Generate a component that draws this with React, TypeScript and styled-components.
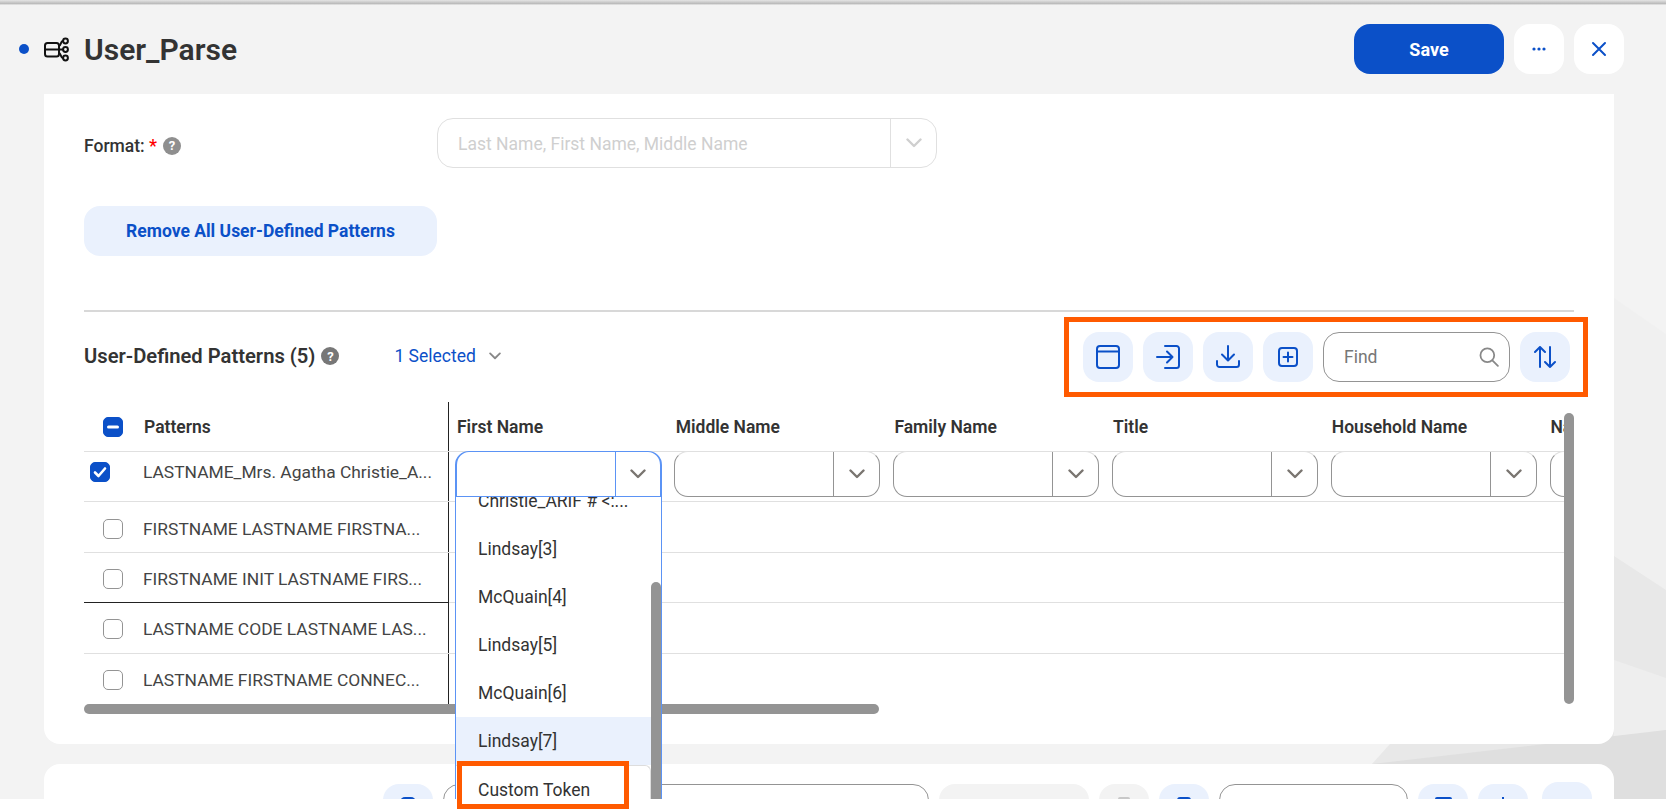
import React, { FC } from 'react'
import styled, { createGlobalStyle } from 'styled-components'

const BLUE = '#0b50c8'
const TINT = '#eaf1fd'
const THUMB = '#949494'
const LINE = '#e0e0e0'

const GlobalStyle = createGlobalStyle`
	html, body {
		margin: 0;
		padding: 0;
		background: #fff;
		overflow: hidden;
		font-family: Roboto, 'Liberation Sans', sans-serif;
	}
	* {
		box-sizing: border-box;
	}
`

const columns = ['First Name', 'Middle Name', 'Family Name', 'Title', 'Household Name', 'Name Suffix']

const rows = [
	{ text: 'FIRSTNAME LASTNAME FIRSTNA...' },
	{ text: 'FIRSTNAME INIT LASTNAME FIRS...', strong: true },
	{ text: 'LASTNAME CODE LASTNAME LAS...' },
	{ text: 'LASTNAME FIRSTNAME CONNEC...' },
]

const options = ['Christie_ARIF # <:...', 'Lindsay[3]', 'McQuain[4]', 'Lindsay[5]', 'McQuain[6]', 'Lindsay[7]']

const Chevron: FC<{ size?: number; color?: string }> = ({ size = 16, color = '#7a7570' }) => (
	<svg width={size} height={size} viewBox="0 0 16 16" fill="none" stroke={color} strokeWidth="2.4" strokeLinecap="round" strokeLinejoin="round">
		<path d="M1.5 4.5 8 11l6.5-6.5" />
	</svg>
)

const FlowIcon = () => (
	<svg width="25" height="25" viewBox="0 0 25 25" fill="none" stroke="#111" strokeWidth="2" strokeLinecap="round" strokeLinejoin="round">
		<rect x="1" y="6" width="14" height="13.5" rx="2.5" />
		<path d="M1 12.5h18M15 9c2 0 1.5-5 4-5M15 16c2 0 1.5 5 4 5" />
		<circle cx="21.5" cy="4" r="2.4" />
		<circle cx="21.5" cy="12.5" r="2.4" />
		<circle cx="21.5" cy="21" r="2.4" />
	</svg>
)

const WindowIcon = () => (
	<svg width="24" height="24" viewBox="0 0 24 24" fill="none" stroke={BLUE} strokeWidth="2">
		<rect x="1" y="1" width="22" height="22" rx="3" />
		<path d="M1 6.5h22" />
	</svg>
)

const ImportIcon = () => (
	<svg width="24" height="24" viewBox="0 0 24 24" fill="none" stroke={BLUE} strokeWidth="2" strokeLinecap="round" strokeLinejoin="round">
		<path d="M9 1h11.5A2.5 2.5 0 0 1 23 3.5v17a2.5 2.5 0 0 1-2.5 2.5H9" />
		<path d="M1 12h15M11 6.5l5.5 5.5-5.5 5.5" />
	</svg>
)

const DownloadIcon = () => (
	<svg width="24" height="24" viewBox="0 0 24 24" fill="none" stroke={BLUE} strokeWidth="2" strokeLinecap="round" strokeLinejoin="round">
		<path d="M12 1v14M6 9.5l6 6 6-6" />
		<path d="M1 16v3.5A2.5 2.5 0 0 0 3.5 22h17a2.5 2.5 0 0 0 2.5-2.5V16" />
	</svg>
)

const PlusBoxIcon = () => (
	<svg width="20" height="20" viewBox="0 0 20 20" fill="none" stroke={BLUE} strokeWidth="2" strokeLinecap="round">
		<rect x="1" y="1" width="18" height="18" rx="3" />
		<path d="M10 5.5v9M5.5 10h9" />
	</svg>
)

const SortIcon = () => (
	<svg width="22" height="22" viewBox="0 0 22 22" fill="none" stroke={BLUE} strokeWidth="2" strokeLinecap="round" strokeLinejoin="round">
		<path d="M6 21V1M1 6l5-5 5 5" />
		<path d="M16 1v20M11 16l5 5 5-5" />
	</svg>
)

const SearchIcon = () => (
	<svg width="20" height="20" viewBox="0 0 18 18" fill="none" stroke="#888" strokeWidth="1.6" strokeLinecap="round">
		<circle cx="7.5" cy="7.5" r="6.2" />
		<path d="M12 12l5 5" />
	</svg>
)

const App: FC = () => (
	<Root>
		<GlobalStyle />
		<Viewport>
			<Backdrop viewBox="0 0 1666 809" aria-hidden="true">
				<polygon points="1400,733 1372,764 1372,809 1666,809 1666,334 1614,298" fill="#f0f0f0" />
				<polygon points="1614,556 1666,590 1666,809 1372,809 1372,764 1390,744" fill="#e8e8e8" />
				<polygon points="1614,660 1666,678 1666,730 1614,738" fill="#eeeeee" />
				<polygon points="1372,764 1666,730 1666,809 1372,809" fill="#dfdfdf" />
			</Backdrop>
			<TopShade />
			<PageHeader>
				<TitleGroup>
					<Dot />
					<FlowIcon />
					<Title>User_Parse</Title>
				</TitleGroup>
				<HeaderActions>
					<SaveButton>Save</SaveButton>
					<WhiteButton aria-label="More">
						<svg width="16" height="16" viewBox="0 0 16 16" fill={BLUE}>
							<circle cx="3" cy="8" r="1.6" />
							<circle cx="8" cy="8" r="1.6" />
							<circle cx="13" cy="8" r="1.6" />
						</svg>
					</WhiteButton>
					<WhiteButton aria-label="Close">
						<svg width="16" height="16" viewBox="0 0 16 16" fill="none" stroke={BLUE} strokeWidth="2" strokeLinecap="round">
							<path d="M2 2l12 12M14 2 2 14" />
						</svg>
					</WhiteButton>
				</HeaderActions>
			</PageHeader>

			<MainCard>
				<FormatRow>
					<FormatLabel>
						Format: <Required>*</Required>
						<HelpDot $color="#8f8f8f">?</HelpDot>
					</FormatLabel>
					<FormatSelect>
						<Placeholder>Last Name, First Name, Middle Name</Placeholder>
						<FormatArrow>
							<Chevron color="#cfcfcf" />
						</FormatArrow>
					</FormatSelect>
				</FormatRow>

				<RemoveButton>Remove All User-Defined Patterns</RemoveButton>
				<Divider />

				<SectionRow>
					<SectionLeft>
						<SectionTitle>User-Defined Patterns (5)</SectionTitle>
						<HelpDot $color="#777">?</HelpDot>
						<SelectedLabel>1 Selected</SelectedLabel>
						<Chevron size={12} color="#888" />
					</SectionLeft>
					<Toolbar>
						<TintButton aria-label="Layout"><WindowIcon /></TintButton>
						<TintButton aria-label="Import"><ImportIcon /></TintButton>
						<TintButton aria-label="Download"><DownloadIcon /></TintButton>
						<TintButton aria-label="Add"><PlusBoxIcon /></TintButton>
						<SearchBox>
							<span>Find</span>
							<SearchIcon />
						</SearchBox>
						<TintButton aria-label="Sort"><SortIcon /></TintButton>
					</Toolbar>
				</SectionRow>

				<TableArea>
					<Table>
						<HeadRow>
							<HeadFrozenCell>
								<CheckSlot $inset={19}>
									<CheckBox $on>
										<svg width="12" height="12" viewBox="0 0 12 12" stroke="#fff" strokeWidth="3" strokeLinecap="round">
											<path d="M1.5 6h9" />
										</svg>
									</CheckBox>
								</CheckSlot>
								<HeadText>Patterns</HeadText>
							</HeadFrozenCell>
							<HeadColumns>
								{columns.map((name) => (
									<HeadColumn key={name}>{name}</HeadColumn>
								))}
							</HeadColumns>
						</HeadRow>

						<BodyRow>
							<FrozenCell $raised>
								<CheckSlot $inset={6}>
									<CheckBox $on>
										<svg width="14" height="14" viewBox="0 0 14 14" fill="none" stroke="#fff" strokeWidth="2.6" strokeLinecap="round" strokeLinejoin="round">
											<path d="M2 7.5 5.5 11 12 3.5" />
										</svg>
									</CheckBox>
								</CheckSlot>
								<PatternText>LASTNAME_Mrs. Agatha Christie_A...</PatternText>
							</FrozenCell>
							<SelectRow>
								{columns.map((name, i) => (
									<CellSelect key={name} $open={i === 0}>
										<CellField />
										<CellArrow $open={i === 0}>
											<Chevron />
										</CellArrow>
									</CellSelect>
								))}
							</SelectRow>
						</BodyRow>

						{rows.map((row) => (
							<BodyRow key={row.text}>
								<FrozenCell $strong={row.strong}>
									<CheckSlot $inset={19}>
										<CheckBox />
									</CheckSlot>
									<PatternText>{row.text}</PatternText>
								</FrozenCell>
							</BodyRow>
						))}
					</Table>

					<VerticalThumb />
					<HorizontalThumb />

					<Dropdown>
						<OptionList>
							{options.map((option) => (
								<Option key={option} $active={option === 'Lindsay[7]'}>
									{option}
								</Option>
							))}
							<CustomOption>Custom Token</CustomOption>
						</OptionList>
						<DropdownThumb />
					</Dropdown>
				</TableArea>
			</MainCard>

			<SecondCard>
				<TintButton aria-label="Settings">
					<svg width="16" height="24" viewBox="0 0 16 24" fill={BLUE}><rect width="16" height="24" rx="5" /></svg>
				</TintButton>
				<BlankInput $width={486} />
				<GreyButton $width={150} />
				<GreyButton $width={50}>
					<svg width="12" height="24" viewBox="0 0 12 24" fill="#c8c8c8"><rect width="12" height="24" rx="2" /></svg>
				</GreyButton>
				<TintButton aria-label="Copy">
					<svg width="14" height="24" viewBox="0 0 14 24" fill={BLUE}><rect width="14" height="24" rx="3" /></svg>
				</TintButton>
				<BlankInput $width={189} />
				<TintButton aria-label="Layout">
					<svg width="17" height="24" viewBox="0 0 17 24" fill={BLUE}><rect width="17" height="24" rx="2" /></svg>
				</TintButton>
				<TintButton aria-label="Add">
					<svg width="24" height="24" viewBox="0 0 24 24" fill="none" stroke={BLUE} strokeWidth="2"><path d="M12 0v24" /></svg>
				</TintButton>
				<RaisedButton aria-label="Sort" />
			</SecondCard>
		</Viewport>
		<TokenHighlight />
	</Root>
)

const Root = styled.div`
	position: relative;
	width: 100%;
	height: 809px;
	background: #fff;
	overflow: hidden;
`

const Viewport = styled.div`
	position: relative;
	height: 799px;
	background: #f3f3f3;
	overflow: hidden;
`

const Backdrop = styled.svg`
	position: absolute;
	inset: 0;
	width: 1666px;
	height: 809px;
`

const TopShade = styled.div`
	position: relative;
	height: 5px;
	background: linear-gradient(#e4e4e4, #b9b9b9 75%, #f3f3f3);
`

const PageHeader = styled.header`
	position: relative;
	display: flex;
	justify-content: space-between;
	height: 89px;
	padding: 19px 42px 0 19px;
`

const TitleGroup = styled.div`
	display: flex;
	align-items: center;
	height: 50px;
`

const Dot = styled.span`
	width: 10px;
	height: 10px;
	margin-right: 15px;
	border-radius: 50%;
	background: ${BLUE};
`

const Title = styled.h1`
	margin: 0 0 0 15px;
	font-size: 30px;
	font-weight: 600;
	color: #333;
`

const HeaderActions = styled.div`
	display: flex;
	gap: 10px;
`

const SaveButton = styled.button`
	width: 150px;
	height: 50px;
	border: 0;
	border-radius: 16px;
	background: ${BLUE};
	color: #fff;
	font: 700 18px Roboto, sans-serif;
`

const IconButton = styled.button`
	display: flex;
	flex: none;
	align-items: center;
	justify-content: center;
	width: 50px;
	height: 50px;
	padding: 0;
	border: 0;
	border-radius: 16px;
`

const WhiteButton = styled(IconButton)`
	background: #fff;
`

const TintButton = styled(IconButton)`
	background: ${TINT};
`

const MainCard = styled.section`
	position: relative;
	z-index: 1;
	height: 650px;
	margin: 0 52px 0 44px;
	padding: 24px 40px 0;
	border-radius: 0 0 16px 16px;
	background: #fff;
`

const FormatRow = styled.div`
	display: flex;
	align-items: center;
`

const FormatLabel = styled.div`
	display: flex;
	align-items: center;
	width: 353px;
	padding-top: 5px;
	font-size: 17.5px;
	font-weight: 500;
	color: #333;
	white-space: pre;
`

const Required = styled.span`
	color: #f00;
	font-size: 18px;
`

const HelpDot = styled.span<{ $color: string }>`
	display: inline-flex;
	align-items: center;
	justify-content: center;
	width: 18px;
	height: 18px;
	margin-left: 6px;
	border-radius: 50%;
	background: ${({ $color }) => $color};
	color: #fff;
	font-size: 13px;
	font-weight: 700;
`

const FormatSelect = styled.div`
	display: flex;
	width: 500px;
	height: 50px;
	border: 1px solid ${LINE};
	border-radius: 16px;
`

const Placeholder = styled.div`
	flex: 1;
	padding-left: 20px;
	color: #cfcfcf;
	font-size: 17.5px;
	line-height: 50px;
`

const FormatArrow = styled.div`
	display: flex;
	align-items: center;
	justify-content: center;
	width: 46px;
	border-left: 1px solid ${LINE};
`

const RemoveButton = styled.button`
	display: block;
	width: 353px;
	height: 50px;
	margin-top: 38px;
	border: 0;
	border-radius: 16px;
	background: ${TINT};
	color: ${BLUE};
	font: 700 17.5px Roboto, sans-serif;
`

const Divider = styled.hr`
	height: 2px;
	margin: 54px 0 0;
	border: 0;
	background: #d8d8d8;
`

const SectionRow = styled.div`
	display: flex;
	align-items: center;
	justify-content: space-between;
	height: 80px;
	margin: 5px -14px 0 0;
`

const SectionLeft = styled.div`
	display: flex;
	align-items: center;
	margin-top: -2px;
`

const SectionTitle = styled.h2`
	margin: 0;
	font-size: 20.2px;
	font-weight: 600;
	color: #333;
`

const SelectedLabel = styled.span`
	margin: 0 13px 0 55px;
	color: ${BLUE};
	font-size: 17.5px;
`

const Toolbar = styled.div`
	display: flex;
	align-items: center;
	gap: 10px;
	width: 524px;
	height: 80px;
	padding-left: 14px;
	border: 5px solid #ff5a00;
`

const SearchBox = styled.div`
	display: flex;
	flex: none;
	align-items: center;
	justify-content: space-between;
	width: 187px;
	height: 50px;
	padding: 0 10px 0 20px;
	border: 1px solid ${THUMB};
	border-radius: 16px;
	color: #777;
	font-size: 17.5px;
`

const TableArea = styled.div`
	position: relative;
	width: 1490px;
	margin-top: 5px;
`

const Table = styled.div`
	width: 1480px;
	overflow: hidden;
`

const HeadRow = styled.div`
	display: flex;
	height: 50px;
	border-bottom: 1px solid ${LINE};
`

const BodyRow = styled.div`
	display: flex;
	height: 50.4px;
	border-bottom: 1px solid ${LINE};
	&:last-child {
		border-bottom: 0;
	}
`

const FrozenCell = styled.div<{ $raised?: boolean; $strong?: boolean }>`
	display: flex;
	flex: none;
	align-items: center;
	width: 365px;
	height: ${({ $strong }) => ($strong ? 'calc(100% + 1px)' : 'auto')};
	padding: ${({ $raised }) => ($raised ? '0 0 10px' : '3px 0 0')};
	border-right: 1px solid #222;
	border-bottom: ${({ $strong }) => ($strong ? '1px solid #222' : '0')};
`

const HeadFrozenCell = styled(FrozenCell)`
	padding: 0;
`

const CheckSlot = styled.div<{ $inset: number }>`
	flex: none;
	width: 59px;
	padding-left: ${({ $inset }) => $inset}px;
`

const CheckBox = styled.div<{ $on?: boolean }>`
	display: flex;
	align-items: center;
	justify-content: center;
	width: 20px;
	height: 20px;
	border: 1px solid ${({ $on }) => ($on ? BLUE : THUMB)};
	border-radius: 5px;
	background: ${({ $on }) => ($on ? BLUE : '#fff')};
`

const HeadText = styled.span`
	margin-left: 1px;
	font-size: 17.5px;
	font-weight: 600;
	color: #333;
`

const PatternText = styled.span`
	font-size: 17.4px;
	color: #444;
	white-space: nowrap;
`

const HeadColumns = styled.div`
	display: flex;
	align-items: center;
	padding-left: 8px;
`

const HeadColumn = styled.div`
	flex: none;
	width: 218.7px;
	font-size: 17.5px;
	font-weight: 600;
	color: #333;
`

const SelectRow = styled.div`
	display: flex;
	gap: 13px;
	height: 46px;
	margin-top: -1px;
	padding-left: 6px;
`

const CellSelect = styled.div<{ $open?: boolean }>`
	display: flex;
	flex: none;
	width: ${({ $open }) => ($open ? '207px' : '206px')};
	margin-right: ${({ $open }) => ($open ? '-1px' : '0')};
	border: 1px solid ${({ $open }) => ($open ? '#5b93f5' : THUMB)};
	border-top-color: ${({ $open }) => ($open ? '#5b93f5' : LINE)};
	border-width: ${({ $open }) => ($open ? '1px 2px' : '1px')};
	border-radius: ${({ $open }) => ($open ? '14px 14px 0 0' : '14px')};
	background: #fff;
`

const CellField = styled.div`
	flex: 1;
`

const CellArrow = styled.div<{ $open?: boolean }>`
	display: flex;
	align-items: center;
	justify-content: center;
	width: ${({ $open }) => ($open ? '45px' : '46px')};
	border-left: 1px solid ${({ $open }) => ($open ? '#5b93f5' : THUMB)};
`

const VerticalThumb = styled.div`
	position: absolute;
	top: 11px;
	right: 0;
	width: 10px;
	height: 291px;
	border-radius: 5px;
	background: ${THUMB};
`

const HorizontalThumb = styled.div`
	position: absolute;
	top: 302px;
	left: 0;
	width: 795px;
	height: 10px;
	border-radius: 5px;
	background: ${THUMB};
`

const Dropdown = styled.div`
	position: absolute;
	top: 95px;
	left: 371px;
	width: 207px;
	height: 302px;
	border: solid #5b93f5;
	border-width: 0 1px;
	background: #fff;
	overflow: hidden;
`

const OptionList = styled.div`
	margin-top: -20px;
`

const Option = styled.div<{ $active?: boolean }>`
	width: 195px;
	height: 48px;
	padding-left: 22px;
	background: ${({ $active }) => ($active ? TINT : '#fff')};
	color: #333;
	font-size: 17.5px;
	line-height: 48px;
	white-space: nowrap;
`

const CustomOption = styled(Option)`
	border-top: 1px solid #ddd;
	border-right: 1px solid #ddd;
	border-radius: 0 6px 0 0;
`

const DropdownThumb = styled.div`
	position: absolute;
	top: 85px;
	right: 0;
	width: 10px;
	height: 230px;
	border-radius: 5px 5px 0 0;
	background: ${THUMB};
`

const SecondCard = styled.section`
	position: relative;
	display: flex;
	gap: 10px;
	height: 60px;
	margin: 20px 52px 0 44px;
	padding: 20px 0 0 339px;
	border-radius: 16px 16px 0 0;
	background: #fff;
`

const BlankInput = styled.div<{ $width: number }>`
	flex: none;
	width: ${({ $width }) => $width}px;
	height: 50px;
	border: 1px solid ${THUMB};
	border-radius: 16px;
`

const GreyButton = styled(IconButton)<{ $width: number }>`
	width: ${({ $width }) => $width}px;
	background: #f3f3f3;
`

const RaisedButton = styled(TintButton)`
	margin: -2px 0 0 4px;
`

const TokenHighlight = styled.div`
	position: absolute;
	z-index: 2;
	top: 761px;
	left: 457px;
	width: 172px;
	height: 48px;
	border: 5px solid #ff5a00;
`

export default App
